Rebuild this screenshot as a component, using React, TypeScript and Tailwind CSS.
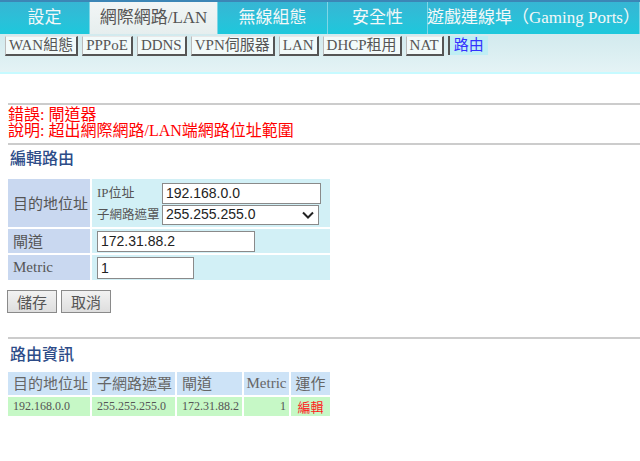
import React from 'react';

const serif = 'font-["Liberation_Serif","Noto_Sans_CJK_TC",serif]';

const tabs = [
    { label: '設定', w: 'w-[90px]' },
    { label: '網際網路/LAN', w: 'w-[128px]', active: true },
    { label: '無線組態', w: 'w-[110px]' },
    { label: '安全性', w: 'w-[100px]' },
    { label: '遊戲連線埠（Gaming Ports）', w: 'w-[212px]' },
];

const subTabs = ['WAN組態', 'PPPoE', 'DDNS', 'VPN伺服器', 'LAN', 'DHCP租用', 'NAT'];

const routes = [{ dest: '192.168.0.0', mask: '255.255.255.0', gw: '172.31.88.2', metric: 1 }];

function Divider() {
    return <div className="ml-[8px] h-[2px] bg-[#cccccc]" />;
}

export default function App() {
    return (
        <div className={`w-[640px] h-[461px] overflow-hidden bg-white ${serif}`}>
            {/* top tabs */}
            <div className="flex h-[34px] border-t-2 border-[#3c86b6] bg-gradient-to-b from-[#36b6d4] to-[#1cc8dc]">
                {tabs.map((t) => (
                    <div
                        key={t.label}
                        className={`${t.w} flex items-center justify-center text-[17px] whitespace-nowrap border-r border-[#7fd6e6] ${
                            t.active ? 'bg-gradient-to-b from-[#f2f6f6] to-[#e6eeee] text-[#555]' : 'text-[#f4f8f8]'
                        }`}
                    >
                        {t.label}
                    </div>
                ))}
            </div>

            {/* sub tabs */}
            <div className="h-[40px] border-b-2 border-[#c6faff] bg-gradient-to-b from-[#d2eaee] to-[#e4f3f5] pt-[2px] pl-[5px]">
                <div className="flex gap-[4px] items-start">
                    {subTabs.map((s) => (
                        <div
                            key={s}
                            className="h-[20px] px-[3px] flex items-center bg-[#f2fafa] text-[15px] leading-none text-[#555] border-t border-l border-t-[#e8e8e8] border-l-[#bbbbbb] border-r-2 border-b-2 border-r-[#555] border-b-[#555]"
                        >
                            {s}
                        </div>
                    ))}
                    <div className="h-[19px] px-[4px] flex items-center bg-[#bfeef4] text-[15px] leading-none text-[#3333ff] border-l-2 border-[#555]">
                        路由
                    </div>
                </div>
            </div>

            <div className="mt-[29px]">
                <Divider />
            </div>

            {/* error */}
            <div className="ml-[8px] mt-[2px] text-[16px] leading-[16px] text-[#ff0000]">
                <div>錯誤: 閘道器</div>
                <div>說明: 超出網際網路/LAN端網路位址範圍</div>
            </div>

            <div className="mt-[4px]">
                <Divider />
            </div>

            <div className='ml-[10px] mt-[2px] h-[20px] leading-[20px] text-[16px] font-medium text-[#2d4c88] font-["Noto_Sans_CJK_TC",sans-serif]'>
                編輯路由
            </div>

            {/* edit form */}
            <table className="ml-[6px] mt-[10px] border-separate border-spacing-[2px] text-[#555]">
                <tbody>
                    <tr>
                        <td className='w-[82px] h-[48px] bg-[#c9d8f0] pl-[5px] text-[15px] font-["Noto_Sans_CJK_TC",sans-serif]'>
                            目的地位址
                        </td>
                        <td className="w-[238px] bg-[#d2f0f6] pl-[5px] pt-[1px]">
                            <div className="grid grid-cols-[65px_auto] gap-y-[1px] items-center">
                                <span className="text-[13px]">IP位址</span>
                                <input
                                    readOnly
                                    value="192.168.0.0"
                                    className='w-[159px] h-[21px] px-[3px] border border-[#8a8a8a] bg-white text-[14px] text-[#222] font-["Liberation_Sans",sans-serif] outline-none'
                                />
                                <span className='text-[12.5px] font-["Noto_Sans_CJK_TC",sans-serif]'>子網路遮罩</span>
                                <div className='w-[157px] h-[20px] border border-[#8a8a8a] bg-white flex items-center justify-between pl-[3px] pr-[4px] text-[14px] text-[#222] font-["Liberation_Sans",sans-serif]'>
                                    <span>255.255.255.0</span>
                                    <svg width="12" height="8" viewBox="0 0 12 8">
                                        <path d="M1 1.5 L6 6.5 L11 1.5" fill="none" stroke="#222" strokeWidth="2" />
                                    </svg>
                                </div>
                            </div>
                        </td>
                    </tr>
                    <tr>
                        <td className='h-[24px] bg-[#c9d8f0] pl-[5px] text-[15px] font-["Noto_Sans_CJK_TC",sans-serif]'>閘道</td>
                        <td className="bg-[#d2f0f6] pl-[5px]">
                            <input
                                readOnly
                                value="172.31.88.2"
                                className='w-[158px] h-[21px] px-[3px] border border-[#8a8a8a] bg-white text-[14px] text-[#222] font-["Liberation_Sans",sans-serif] outline-none block'
                            />
                        </td>
                    </tr>
                    <tr>
                        <td className="h-[25px] bg-[#c9d8f0] pl-[5px] text-[15px]">Metric</td>
                        <td className="bg-[#d2f0f6] pl-[5px]">
                            <input
                                readOnly
                                value="1"
                                className='w-[97px] h-[22px] px-[3px] border border-[#8a8a8a] bg-white text-[14px] text-[#222] font-["Liberation_Sans",sans-serif] outline-none block'
                            />
                        </td>
                    </tr>
                </tbody>
            </table>

            <div className="ml-[7px] mt-[8px] flex gap-[4px]">
                {['儲存', '取消'].map((b) => (
                    <button
                        key={b}
                        className='w-[50px] h-[23px] border border-[#8a8a8a] bg-gradient-to-b from-[#f2f2f2] to-[#dedede] text-[15px] text-[#555] font-["Noto_Sans_CJK_TC",sans-serif] leading-none'
                    >
                        {b}
                    </button>
                ))}
            </div>

            <div className="mt-[24px]">
                <Divider />
            </div>

            <div className='ml-[10px] mt-[3px] h-[22px] leading-[22px] text-[16px] font-medium text-[#2d4c88] font-["Noto_Sans_CJK_TC",sans-serif]'>
                路由資訊
            </div>

            {/* route list */}
            <table className="ml-[6px] mt-[6px] border-separate border-spacing-[2px] text-[#666]">
                <thead>
                    <tr className='h-[22px] text-[15px] font-["Noto_Sans_CJK_TC",sans-serif] font-normal'>
                        <th className="w-[82px] bg-[#cde3f7] pl-[5px] text-left font-normal">目的地位址</th>
                        <th className="w-[83px] bg-[#cde3f7] pl-[5px] text-left font-normal">子網路遮罩</th>
                        <th className="w-[65px] bg-[#cde3f7] pl-[5px] text-left font-normal">閘道</th>
                        <th className={`w-[45px] bg-[#cde3f7] text-center font-normal ${serif}`}>Metric</th>
                        <th className="w-[39px] bg-[#cde3f7] text-center font-normal">運作</th>
                    </tr>
                </thead>
                <tbody>
                    {routes.map((r) => (
                        <tr key={r.dest} className="h-[19px] text-[12px] text-[#555]">
                            <td className="bg-[#c6f8c6] pl-[5px]">{r.dest}</td>
                            <td className="bg-[#c6f8c6] pl-[5px]">{r.mask}</td>
                            <td className="bg-[#c6f8c6] pl-[5px]">{r.gw}</td>
                            <td className="bg-[#c6f8c6] pr-[3px] text-right">{r.metric}</td>
                            <td className='bg-[#c6f8c6] text-center text-[13px] text-[#ff1a1a] font-["Noto_Sans_CJK_TC",sans-serif]'>編輯</td>
                        </tr>
                    ))}
                </tbody>
            </table>
        </div>
    );
}
